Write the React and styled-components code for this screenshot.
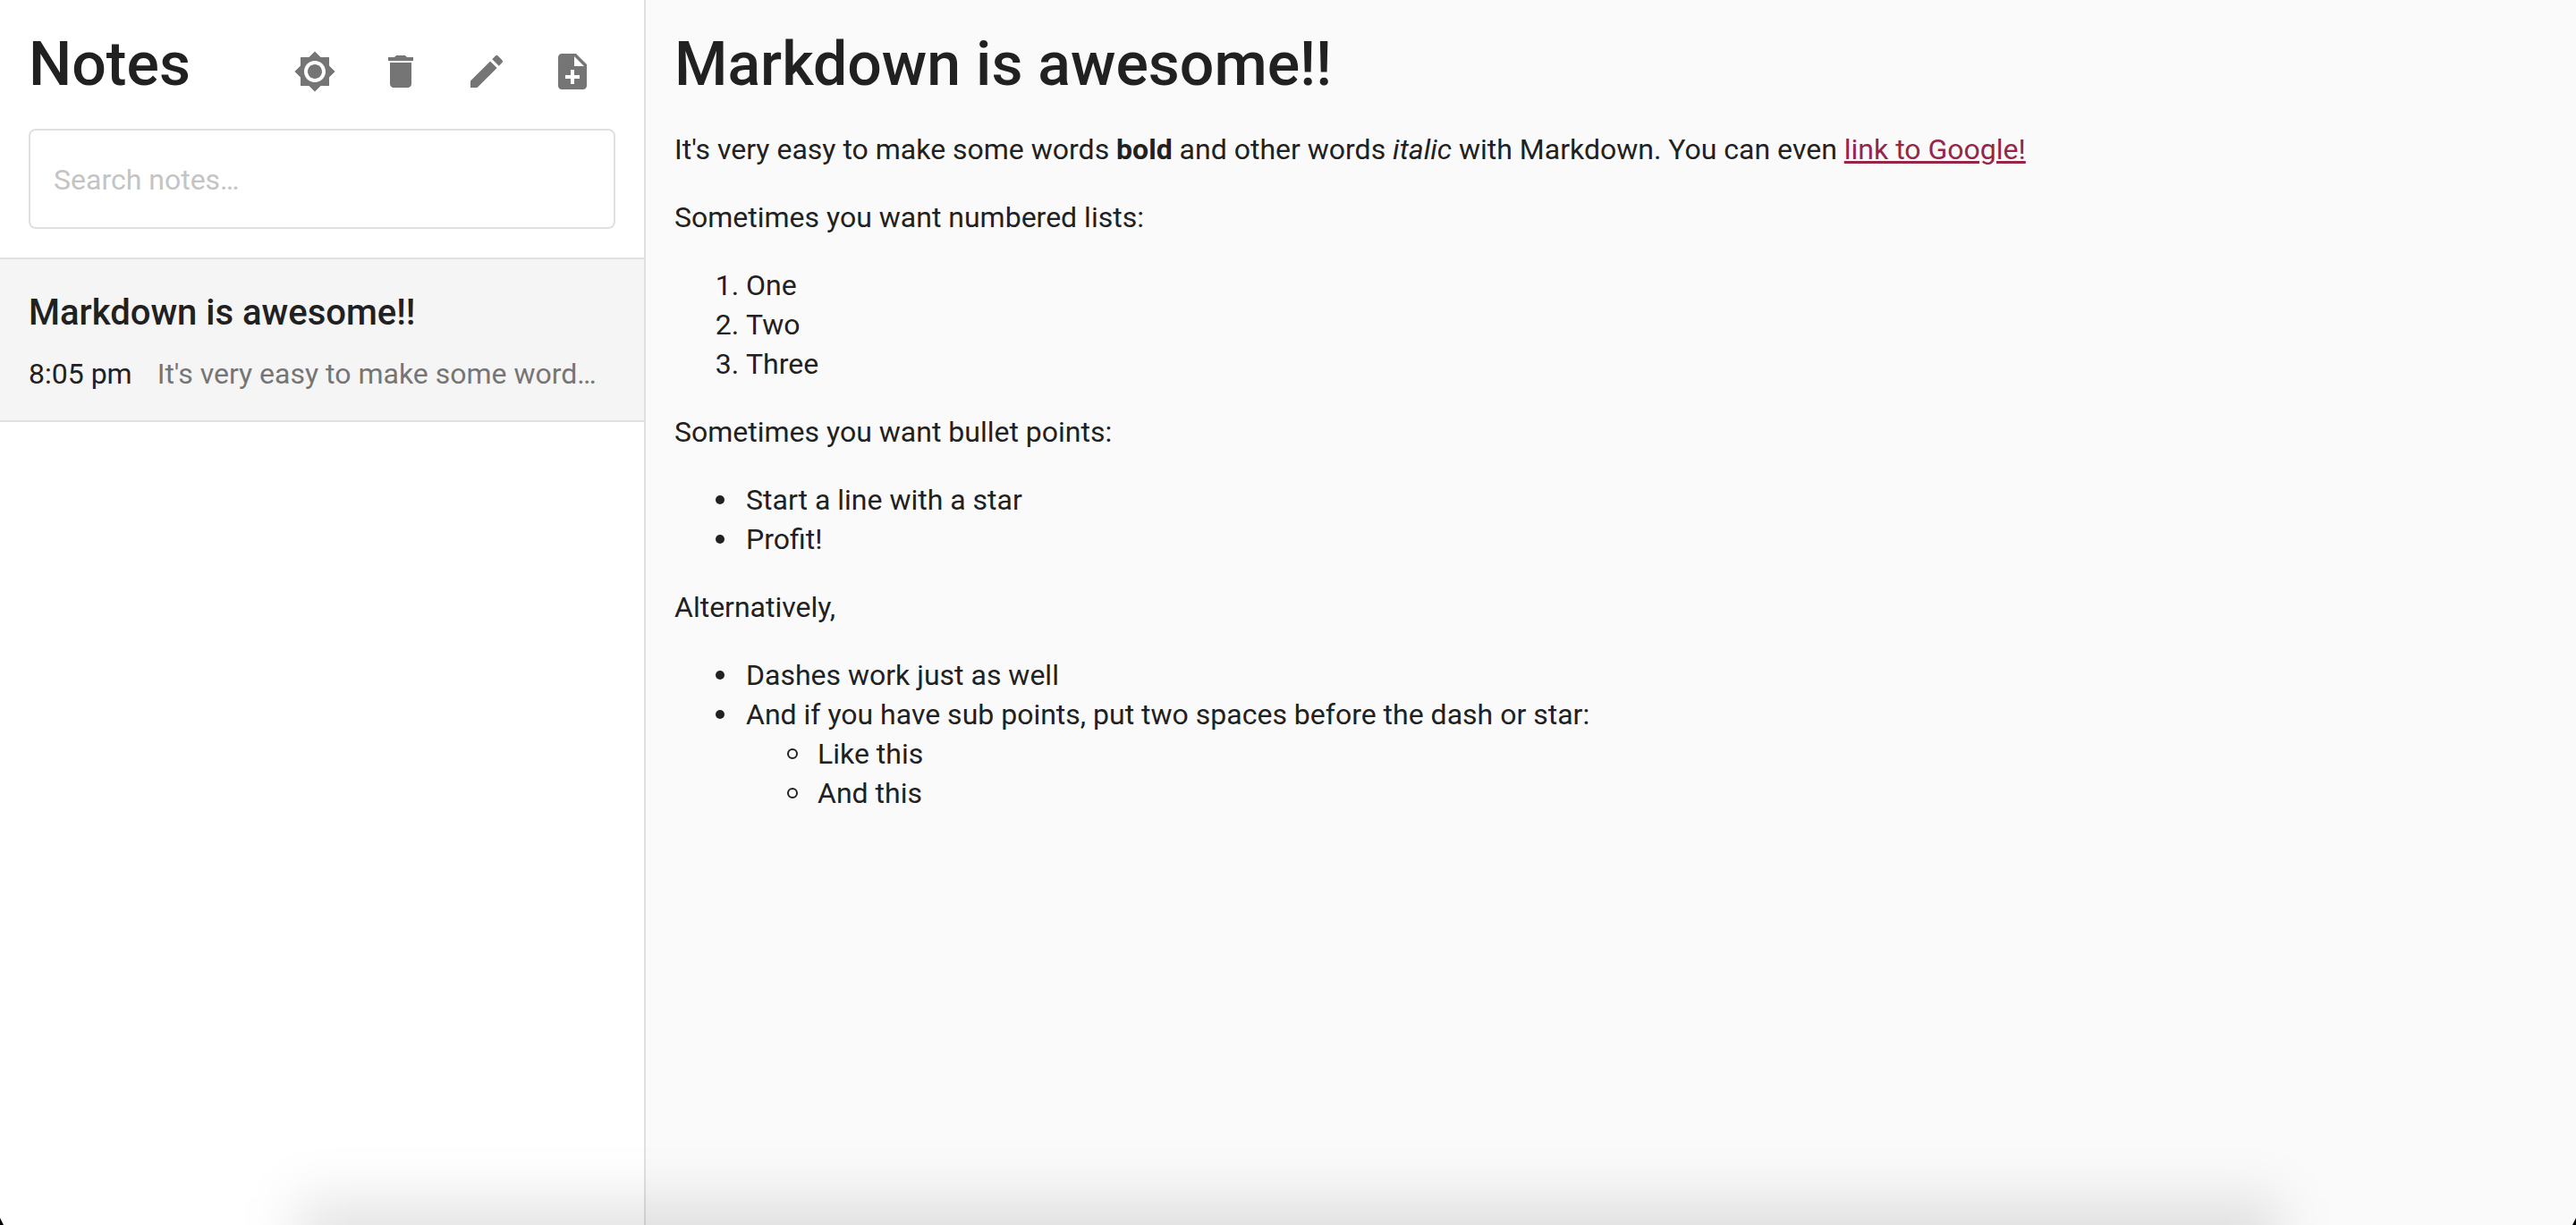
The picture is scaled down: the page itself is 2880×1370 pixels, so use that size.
import React from "react";
import styled, { createGlobalStyle } from "styled-components";
import { MdBrightness7, MdDelete, MdEdit, MdNoteAdd } from "react-icons/md";

const color = {
  text: "#212121",
  muted: "#757575",
  placeholder: "#c4c4c4",
  border: "#e0e0e0",
  paper: "#ffffff",
  page: "#fafafa",
  selected: "#f5f5f5",
  link: "#962548",
};

const GlobalStyle = createGlobalStyle`
  *, *::before, *::after { box-sizing: border-box; }
  body {
    margin: 0;
    background: ${color.page};
    color: ${color.text};
    font-family: Roboto, "Liberation Sans", sans-serif;
    font-size: 32px;
    line-height: 44px;
  }
`;

const Layout = styled.div`
  display: grid;
  grid-template-columns: 1fr 3fr;
  min-height: 100vh;
`;

const Sidebar = styled.aside`
  min-width: 0;
  background: ${color.paper};
`;

const Header = styled.header`
  display: flex;
  align-items: flex-start;
  justify-content: space-between;
  padding: 32px 32px 0;
`;

const Title = styled.h1`
  margin: 0;
  font-size: 68px;
  line-height: 81px;
  font-weight: 500;
`;

const Toolbar = styled.div`
  display: flex;
`;

const IconButton = styled.button`
  display: flex;
  padding: 24px;
  border: 0;
  border-radius: 50%;
  background: none;
  color: ${color.muted};
  font-size: 48px;
  cursor: pointer;
`;

const SearchArea = styled.div`
  padding: 16px 32px 32px;
`;

const SearchInput = styled.input`
  display: block;
  width: 100%;
  height: 112px;
  padding: 2px 26px 0;
  border: 2px solid ${color.border};
  border-radius: 8px;
  background: transparent;
  color: ${color.text};
  font: inherit;

  &::placeholder {
    color: ${color.placeholder};
    opacity: 1;
  }
`;

const NoteList = styled.ul`
  margin: 0;
  padding: 0;
  list-style: none;
  border-top: 2px solid ${color.border};
`;

const NoteItem = styled.li`
  border-bottom: 2px solid ${color.border};
  background: ${(p) => (p.$selected ? color.selected : "transparent")};
`;

const NoteButton = styled.button`
  display: flex;
  flex-direction: column;
  gap: 20px;
  width: 100%;
  padding: 34px 32px 30px;
  border: 0;
  background: none;
  color: inherit;
  font: inherit;
  text-align: left;
  cursor: pointer;
`;

const NoteTitle = styled.span`
  font-size: 40px;
  line-height: 52px;
  font-weight: 500;
`;

const NoteMeta = styled.span`
  display: flex;
  gap: 28px;
  width: 100%;
`;

const NoteTime = styled.span`
  flex: none;
`;

const NotePreview = styled.span`
  flex: 1;
  min-width: 0;
  overflow: hidden;
  color: ${color.muted};
  text-overflow: ellipsis;
  white-space: nowrap;
`;

const Article = styled.main`
  min-width: 0;
  padding: 32px;
  border-left: 2px solid ${color.border};

  p { margin: 32px 0; }
`;

const NumberedList = styled.ol`
  margin: 32px 0;
  padding-left: 80px;
`;

const BulletList = styled.ul`
  margin: 32px 0;
  padding-left: 80px;
  list-style: none;

  > li::before {
    content: "";
    display: inline-block;
    width: 10px;
    height: 10px;
    margin: 0 24px 0 -34px;
    border-radius: 50%;
    background: currentColor;
    vertical-align: 6px;
  }
`;

const SubList = styled(BulletList)`
  margin: 0;

  > li::before {
    width: 12px;
    height: 12px;
    margin: 0 22px 0 -34px;
    border: 2px solid currentColor;
    background: none;
    vertical-align: 5px;
  }
`;

const Link = styled.a`
  color: ${color.link};
`;

const Overlay = styled.div`
  position: fixed;
  inset: 0;
  overflow: hidden;
  pointer-events: none;
`;

const BottomShade = styled.div`
  position: absolute;
  right: 332px;
  bottom: -160px;
  left: 332px;
  height: 190px;
  background: rgba(0, 0, 0, 0.1);
  filter: blur(30px);
`;

const Corner = styled.div`
  position: absolute;
  bottom: 0;
  ${(p) => p.$side}: 0;
  width: 4px;
  height: 8px;
  background: #000000;
  clip-path: ${(p) =>
    p.$side === "left" ? "polygon(0 0, 100% 100%, 0 100%)" : "polygon(100% 0, 100% 100%, 0 100%)"};
`;

const actions = [
  { label: "Toggle theme", Icon: MdBrightness7 },
  { label: "Delete note", Icon: MdDelete },
  { label: "Edit note", Icon: MdEdit },
  { label: "New note", Icon: MdNoteAdd },
];

const notes = [
  {
    title: "Markdown is awesome!!",
    time: "8:05 pm",
    preview: "It's very easy to make some word…",
  },
];

export default function App() {
  return (
    <>
      <GlobalStyle />
      <Layout>
        <Sidebar>
          <Header>
            <Title>Notes</Title>
            <Toolbar>
              {actions.map(({ label, Icon }) => (
                <IconButton key={label} type="button" aria-label={label}>
                  <Icon />
                </IconButton>
              ))}
            </Toolbar>
          </Header>
          <SearchArea>
            <SearchInput type="search" aria-label="Search notes" placeholder="Search notes…" />
          </SearchArea>
          <NoteList>
            {notes.map((note) => (
              <NoteItem key={note.title} $selected>
                <NoteButton type="button">
                  <NoteTitle>{note.title}</NoteTitle>
                  <NoteMeta>
                    <NoteTime>{note.time}</NoteTime>
                    <NotePreview>{note.preview}</NotePreview>
                  </NoteMeta>
                </NoteButton>
              </NoteItem>
            ))}
          </NoteList>
        </Sidebar>
        <Article>
          <Title>Markdown is awesome!!</Title>
          <p>
            It's very easy to make some words <strong>bold</strong> and other words <em>italic</em> with
            Markdown. You can even <Link href="#google">link to Google!</Link>
          </p>
          <p>Sometimes you want numbered lists:</p>
          <NumberedList>
            <li>One</li>
            <li>Two</li>
            <li>Three</li>
          </NumberedList>
          <p>Sometimes you want bullet points:</p>
          <BulletList>
            <li>Start a line with a star</li>
            <li>Profit!</li>
          </BulletList>
          <p>Alternatively,</p>
          <BulletList>
            <li>Dashes work just as well</li>
            <li>
              And if you have sub points, put two spaces before the dash or star:
              <SubList>
                <li>Like this</li>
                <li>And this</li>
              </SubList>
            </li>
          </BulletList>
        </Article>
      </Layout>
      <Overlay aria-hidden="true">
        <BottomShade />
        <Corner $side="left" />
        <Corner $side="right" />
      </Overlay>
    </>
  );
}
